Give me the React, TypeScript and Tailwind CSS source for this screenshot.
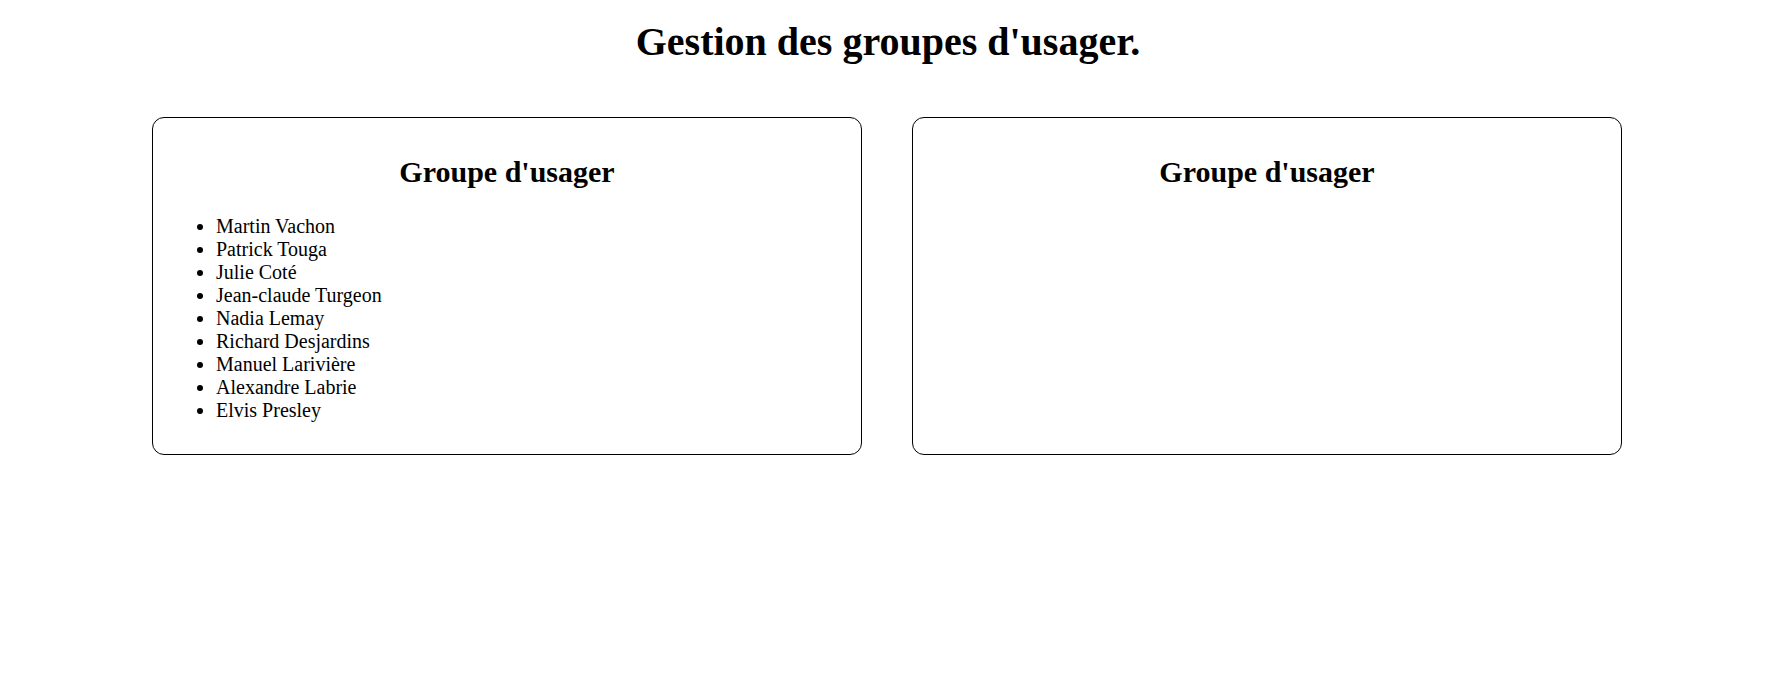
const members: string[] = [
  'Martin Vachon',
  'Patrick Touga',
  'Julie Coté',
  'Jean-claude Turgeon',
  'Nadia Lemay',
  'Richard Desjardins',
  'Manuel Larivière',
  'Alexandre Labrie',
  'Elvis Presley',
];

type GroupCardProps = {
  users: string[];
};

const GroupCard: React.FC<GroupCardProps> = ({ users }) => {
  return (
    <div className="w-[710px] h-[338px] border border-black rounded-[12px] pt-[39px]">
      <h2 className="text-[30px] leading-none font-bold text-center">Groupe d'usager</h2>
      {users.length > 0 && (
        <ul className="list-disc pl-[63px] mt-[28px] text-[20px] leading-[23px]">
          {users.map((name) => (
            <li key={name}>{name}</li>
          ))}
        </ul>
      )}
    </div>
  );
};

export default function App() {
  return (
    <div className="min-h-[697px] bg-white text-black" style={{ fontFamily: '"Liberation Serif", "Times New Roman", serif' }}>
      <h1 className="pt-[22px] pl-[11px] text-[40px] leading-none font-bold text-center">Gestion des groupes d'usager.</h1>
      {/* the two group panels, side by side */}
      <div className="flex gap-[50px] pl-[152px] mt-[55px]">
        <GroupCard users={members} />
        <GroupCard users={[]} />
      </div>
    </div>
  );
}
